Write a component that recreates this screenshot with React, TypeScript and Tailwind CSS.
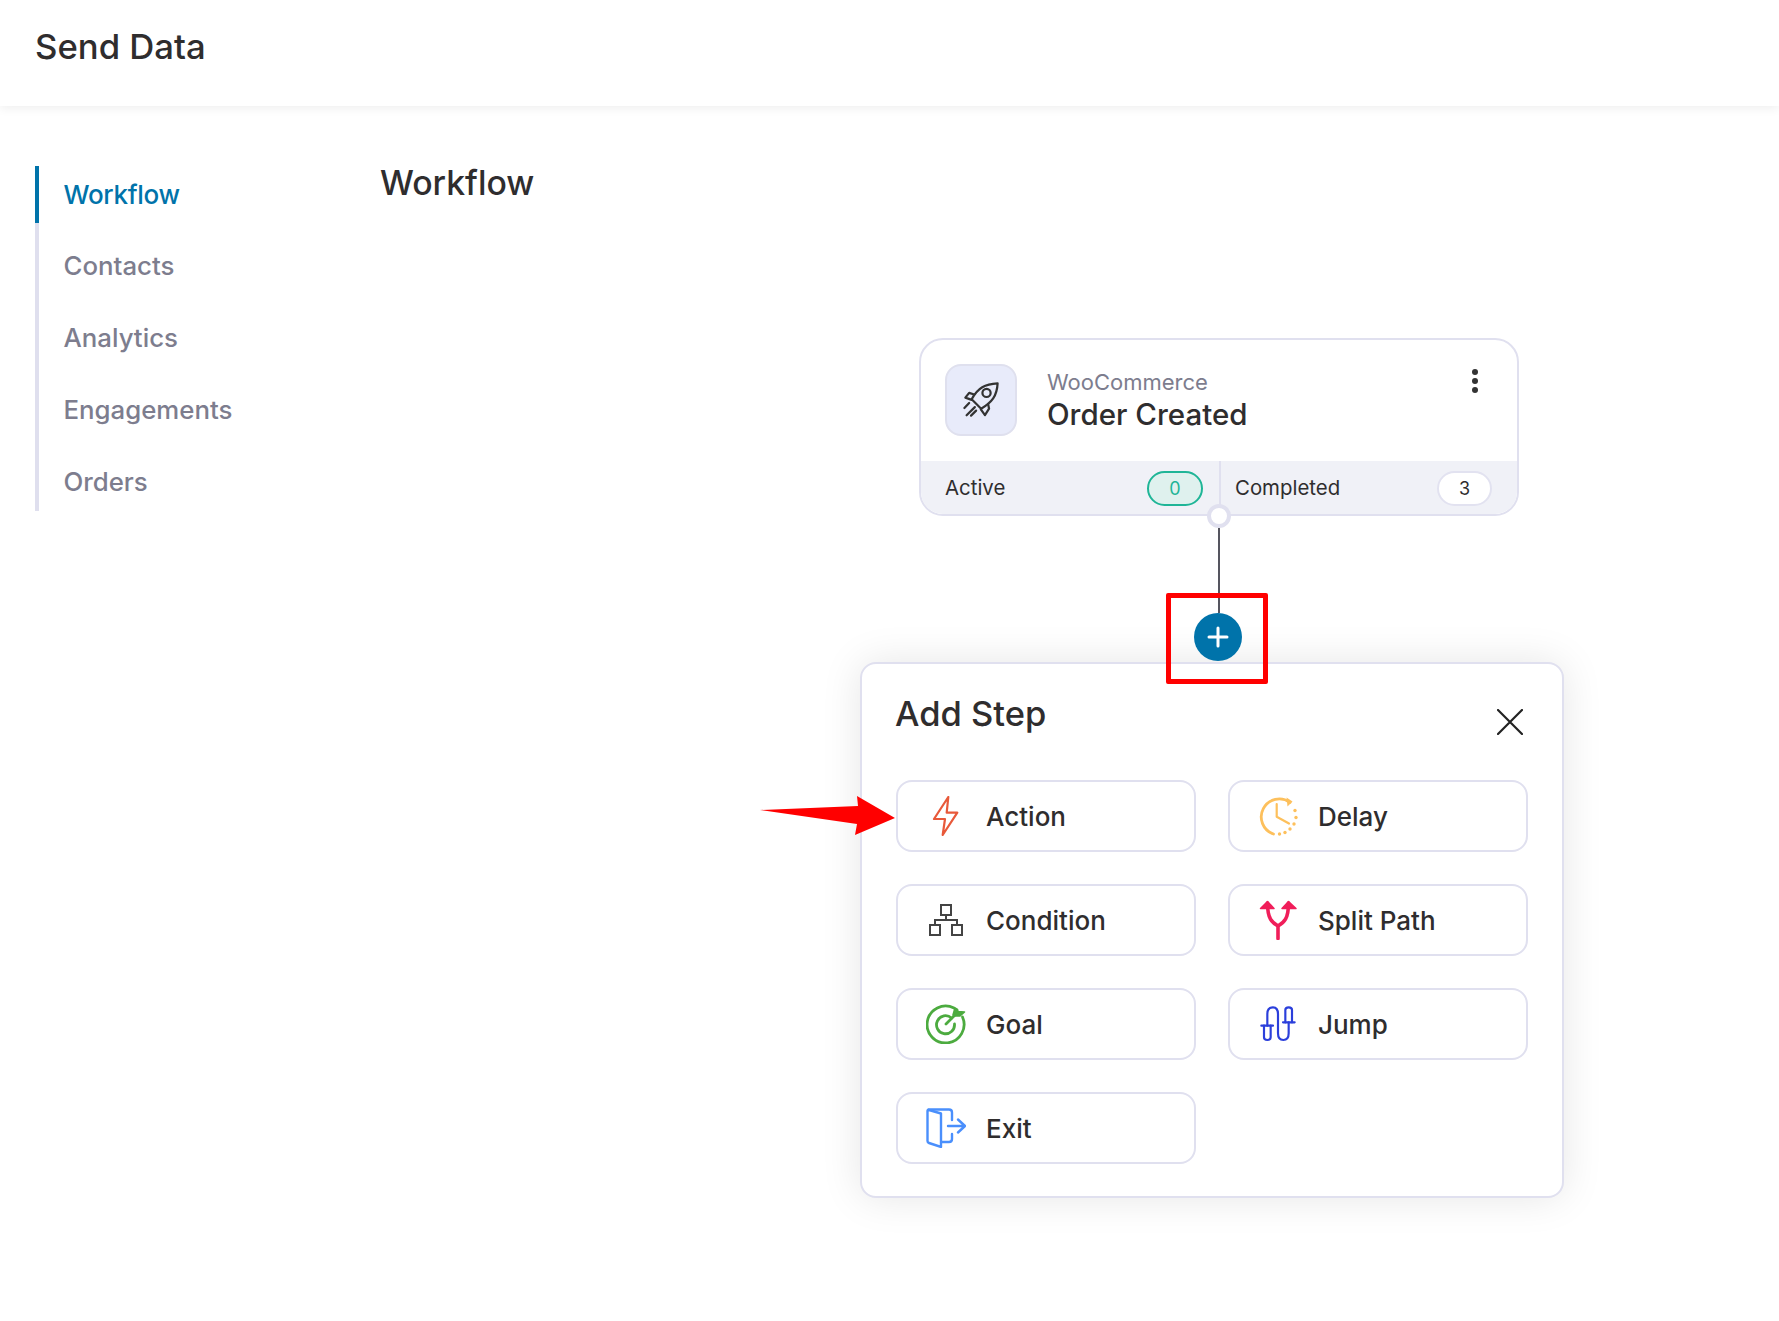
import React from "react";

function Rocket() {
  return (
    <svg viewBox="30 15 215 215" className="w-full h-full" fill="none" stroke="#333" strokeWidth="7" strokeLinecap="round" strokeLinejoin="round">
      <path d="M190 70 C150 72 128 84 108 120 L138 150 C172 130 188 110 190 70 Z" />
      <circle cx="155" cy="100" r="13" />
      <path d="M116 105 L100 100 L88 115 L108 122" />
      <path d="M160 135 L163 150 L150 170 L137 152" />
      <path d="M100 132 L85 148 M118 145 L92 171 M122 156 L106 172" />
    </svg>
  );
}

function ActionIcon() {
  return (
    <svg viewBox="0 0 40 40" className="w-10 h-10" fill="none" stroke="#e8593a" strokeWidth="2.2" strokeLinejoin="round" strokeLinecap="round">
      <path d="M22.3 1 L8 23 L19 23 L16.7 39 L31.3 16.7 L20.7 16.7 Z" />
    </svg>
  );
}

function DelayIcon() {
  return (
    <svg viewBox="0 0 40 40" className="w-10 h-10" fill="none" stroke="#fdc05c" strokeWidth="2.8" strokeLinecap="round" strokeLinejoin="round">
      <path d="M32 6.5 A18 18 0 1 0 15.5 38" />
      <path d="M18.7 8 V20.7 L31 27.5" strokeWidth="2.2" />
      <path d="M28.5 1.5 L34.5 5.5 L29.5 10.5 Z" fill="#fdc05c" stroke="none" />
      <g fill="#fdc05c" stroke="none">
        <circle cx="21.5" cy="38" r="1.7" />
        <circle cx="27" cy="36.5" r="1.7" />
        <circle cx="32" cy="33" r="1.7" />
        <circle cx="36" cy="28" r="1.7" />
        <circle cx="38" cy="21.5" r="1.7" />
        <circle cx="37" cy="14.5" r="1.7" />
      </g>
    </svg>
  );
}

function ConditionIcon() {
  return (
    <svg viewBox="0 0 40 40" className="w-10 h-10" fill="none" stroke="#444" strokeWidth="2">
      <rect x="15" y="5" width="10" height="10" />
      <rect x="4" y="25" width="10" height="10" />
      <rect x="26" y="25" width="10" height="10" />
      <path d="M20 15 V20 M9 25 V20 H31 V25" />
    </svg>
  );
}

function SplitIcon() {
  return (
    <svg viewBox="0 0 40 40" className="w-10 h-10" fill="none" stroke="#f01e5a" strokeWidth="3.6" strokeLinecap="round" strokeLinejoin="round">
      <path d="M20 38.5 V26 C14 22.5 9.5 19 9.5 3 M20 26 C26 22.5 30.5 19 30.5 3" />
      <path d="M2.5 8.5 L9.5 1.5 L16 8.5 Z" fill="#f01e5a" strokeWidth="1.5" />
      <path d="M24 8.5 L30.5 1.5 L38 8.5 Z" fill="#f01e5a" strokeWidth="1.5" />
    </svg>
  );
}

function GoalIcon() {
  return (
    <svg viewBox="0 0 40 40" className="w-10 h-10" fill="none" stroke="#4cab3f" strokeWidth="2.8" strokeLinecap="round" strokeLinejoin="round">
      <path d="M28 4 A18.5 18.5 0 1 0 36.5 13" />
      <path d="M25.5 14 A9 9 0 1 0 28.5 20" />
      <path d="M20 20 L31 9" />
      <path d="M27 11 L29 4 L31.5 5.5 L32 7.5 L38.5 8 L34 12 L29 12 Z" fill="#4cab3f" strokeWidth="1.6" />
    </svg>
  );
}

function JumpIcon() {
  return (
    <svg viewBox="-10 -10 120 120" className="w-10 h-10" fill="none" stroke="#2b3fdb" strokeWidth="6.5" strokeLinecap="round" strokeLinejoin="round">
      <path d="M0 55 H35 M65 45 H100" />
      <path d="M8 55 V90 Q8 98 18 98 Q28 98 28 90 V55" />
      <path d="M72 45 V8 Q72 0 82 0 Q92 0 92 8 V45" />
      <path d="M18 55 V20 Q18 0 35 0 Q50 0 50 20 V78 Q50 98 66 98 Q82 98 82 78 V45" />
    </svg>
  );
}

function ExitIcon() {
  return (
    <svg viewBox="0 0 40 40" className="w-10 h-10" fill="none" stroke="#4a8ffc" strokeWidth="2.4" strokeLinecap="round" strokeLinejoin="round">
      <path d="M1.5 3 Q1.5 1.5 3 2 L15 5.5 V39 L3 35 Q1.5 34.5 1.5 33 Z" />
      <path d="M2.5 1.5 H23 Q26 1.5 26 4.5 V12" />
      <path d="M26 26 V31 Q26 34 23 34 H15.5" />
      <path d="M22 18 H39 M32 11.5 L39 18 L32 24.5" />
    </svg>
  );
}

const steps: { label: string; icon: React.ReactNode }[] = [
  { label: "Action", icon: <ActionIcon /> },
  { label: "Delay", icon: <DelayIcon /> },
  { label: "Condition", icon: <ConditionIcon /> },
  { label: "Split Path", icon: <SplitIcon /> },
  { label: "Goal", icon: <GoalIcon /> },
  { label: "Jump", icon: <JumpIcon /> },
  { label: "Exit", icon: <ExitIcon /> },
];

const nav = ["Workflow", "Contacts", "Analytics", "Engagements", "Orders"];

export default function App() {
  return (
    <div className="relative w-[1779px] h-[1321px] overflow-hidden bg-white font-['Inter',sans-serif] text-[#2f2d2e]">
      <header className="h-[106px] bg-white flex items-center pl-[35px] pb-[13px] shadow-[0_2px_10px_rgba(0,0,0,0.07)]">
        <h1 className="text-[34.7px] leading-none font-medium">Send Data</h1>
      </header>

      <div className="flex">
        <nav className="ml-[35px] mt-[60px] w-[345px] shrink-0">
          <ul className="w-[280px] border-l-4 border-[#dfdfee] flex flex-col gap-[15.5px]">
            {nav.map((n, i) => (
              <li
                key={n}
                className={
                  i === 0
                    ? "relative -ml-[4px] h-[56.5px] pl-[24.5px] flex items-center border-l-4 border-[#0073aa] text-[26px] tracking-[-0.3px] font-medium text-[#0073aa]"
                    : "h-[56.5px] pl-[24.5px] flex items-center text-[25.8px] font-medium text-[#7d7d8e]"
                }
              >
                {n}
              </li>
            ))}
          </ul>
        </nav>

        <main className="flex-1">
          <h2 className="mt-[55px] text-[33.8px] leading-[44px] font-medium">Workflow</h2>

          <div className="mt-[133px] ml-[480px] w-[704px] flex flex-col">
            <div className="ml-[59px] w-[600px] h-[178px] rounded-[24px] border-2 border-[#e0e0ef] bg-white flex flex-col overflow-hidden">
              <div className="h-[121px] flex pl-[24px] pr-[39px] pt-[24px]">
                <div className="w-[72px] h-[72px] rounded-[16px] bg-[#e8ebfa] border-2 border-[#dfe0ee]">
                  <Rocket />
                </div>
                <div className="ml-[30px] pt-[3px]">
                  <div className="text-[22px] leading-[30px] text-[#7d7d8e]">WooCommerce</div>
                  <div className="text-[29.5px] leading-[34px] font-medium">Order Created</div>
                </div>
                <div className="ml-auto mt-[5px] flex flex-col gap-[3px]">
                  <span className="w-[6px] h-[6px] rounded-full bg-[#333]" />
                  <span className="w-[6px] h-[6px] rounded-full bg-[#333]" />
                  <span className="w-[6px] h-[6px] rounded-full bg-[#333]" />
                </div>
              </div>
              <div className="flex-1 bg-[#f0f1f7] flex text-[20.4px] pt-[2px]">
                <div className="-mt-[2px] pt-[2px] w-[300px] pl-[24px] pr-[16px] flex items-center justify-between border-r-2 border-[#e0e0ef]">
                  <span>Active</span>
                  <span className="w-[56px] h-[35px] rounded-full border-2 border-[#1fb597] bg-[#dff1ee] text-[#1fb597] flex items-center justify-center text-[18px]">0</span>
                </div>
                <div className="flex-1 pl-[14px] pr-[25px] flex items-center justify-between">
                  <span>Completed</span>
                  <span className="w-[55px] h-[35px] rounded-full border-2 border-[#e2e2f0] bg-white flex items-center justify-center text-[18px]">3</span>
                </div>
              </div>
            </div>

            <div className="relative flex flex-col items-center w-[48px] ml-[334px]">
              <span className="-mt-[12px] ml-[2px] w-[24px] h-[24px] rounded-full bg-white border-4 border-[#e0e0ef] z-10" />
              <span className="ml-[2px] w-[2px] h-[85px] bg-[#55555f]" />
              <button className="w-[48px] h-[48px] rounded-full bg-[#0073aa] text-white flex items-center justify-center">
                <svg viewBox="0 0 24 24" className="w-[24px] h-[24px]" fill="none" stroke="white" strokeWidth="3" strokeLinecap="round">
                  <path d="M12 3 V21 M3 12 H21" />
                </svg>
              </button>
            </div>

            <section className="mt-[1px] h-[536px] rounded-[16px] border-2 border-[#e0e0ef] bg-white shadow-[0_0_40px_rgba(0,0,0,0.1)] pl-[34px] pr-[34px] pt-[29px]">
              <div className="flex items-start justify-between">
                <h3 className="-ml-[1px] text-[34.5px] leading-[42px] font-medium">Add Step</h3>
                <svg viewBox="0 0 26 26" className="w-[26px] h-[26px] mt-[16px] mr-[5px]" fill="none" stroke="#222" strokeWidth="2.2" strokeLinecap="round">
                  <path d="M1 1 L25 25 M25 1 L1 25" />
                </svg>
              </div>
              <div className="mt-[44.5px] grid grid-cols-[300px_300px] gap-x-[32px] gap-y-[32px]">
                {steps.map((s) => (
                  <div key={s.label} className="h-[72px] rounded-[16px] border-2 border-[#e0e0ef] bg-white flex items-center pl-[28px] gap-[20px] text-[26px] font-medium">
                    {s.icon}
                    <span className="pt-[2px]">{s.label}</span>
                  </div>
                ))}
              </div>
            </section>
          </div>
        </main>
      </div>

      {/* annotation overlays */}
      <div className="absolute left-[1166px] top-[593px] w-[102px] h-[91px] border-[5px] border-[#ff0000] rounded-[2px]" />
      <svg className="absolute left-[756px] top-[790px] w-[144px] h-[50px]" viewBox="756 790 144 50">
        <path d="M760 810 L858 806 L857 796 L895 818 L855 835 L857 824 Z" fill="#ff0000" />
      </svg>
    </div>
  );
}
